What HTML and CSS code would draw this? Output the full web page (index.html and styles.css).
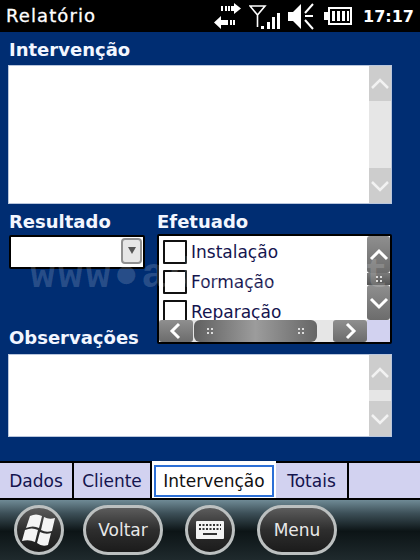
FILE: index.html
```html
<!DOCTYPE html>
<html>
<head>
    <meta charset="UTF-8">
    <meta name="viewport" content="width=device-width, initial-scale=1.0">
    <title>Relatório</title>
    <link rel="stylesheet" href="styles.css">
</head>

<body>
    <div class="phone">
        <!-- Status bar -->
        <div class="titlebar">
            <span class="title">Relatório</span>
            <div class="tray">
                <svg class="ico-sync" width="30" height="30" viewBox="0 0 30 30">
                    <path fill="#fff" d="M8 5h2v5H8zM12 5h2v5h-2zM15 5h2v5h-2zM18 5h3V2l7 5.500-7 5.500v-3h-3z"/>
                    <path fill="#fff" d="M8 15v4h7v5H8v4l-7-6.500z"/>
                    <path fill="#fff" d="M17 19h2v5h-2zM20 19h2v5h-2z"/>
                </svg>
                <svg class="ico-signal" width="32" height="30" viewBox="0 0 32 30">
                    <path fill="none" stroke="#fff" stroke-width="1.600" d="M1 5h15L8.500 14zM8.500 14v12"/>
                    <path fill="#fff" d="M12 25h3v3h-3zM18 21h3v7h-3zM23 16h3v12h-3zM28 12h3v16h-3z"/>
                </svg>
                <svg class="ico-sound" width="28" height="30" viewBox="0 0 28 30">
                    <path fill="#fff" d="M1 11h5l8-8v25l-8-8H1z"/>
                    <path fill="none" stroke="#fff" stroke-width="2" d="M18 12l8-9M18 15h8M18 19l8 9"/>
                </svg>
                <svg class="ico-batt" width="28" height="20" viewBox="0 0 28 20">
                    <path fill="#fff" d="M4 1h24v18H4zM0 6h4v8H0z"/>
                    <path fill="#000" d="M6 3h20v14H6z"/>
                    <path fill="#fff" d="M8 5h3v10H8zM13 5h3v10h-3zM18 5h3v10h-3zM23 5h2v10h-2z"/>
                </svg>
                <span class="clock">17:17</span>
            </div>
        </div>

        <!-- Form -->
        <div class="content">
            <div class="watermark">www●adamix●pt</div>

            <label class="lbl">Intervenção</label>
            <div class="memo memo-big">
                <div class="vscroll">
                    <div class="arrow-btn"><svg width="22" height="16" viewBox="0 0 22 16"><path d="M3 12l8-8 8 8" fill="none" stroke="#f2f2f2" stroke-width="2.500"/></svg></div>
                    <div class="track"></div>
                    <div class="arrow-btn"><svg width="22" height="16" viewBox="0 0 22 16"><path d="M3 4l8 8 8-8" fill="none" stroke="#f2f2f2" stroke-width="2.500"/></svg></div>
                </div>
            </div>

            <div class="two-col">
                <div class="col-left">
                    <label class="lbl">Resultado</label>
                    <div class="combo">
                        <div class="combo-btn"><span class="combo-tri"></span></div>
                    </div>
                </div>
                <div class="col-right">
                    <label class="lbl lbl-right">Efetuado</label>
                    <div class="list">
                        <div class="list-main">
                            <div class="items">
                                <div class="item"><span class="check"></span>Instalação</div>
                                <div class="item"><span class="check"></span>Formação</div>
                                <div class="item"><span class="check"></span>Reparação</div>
                            </div>
                            <div class="hscroll">
                                <div class="dark-btn"><svg width="24" height="18" viewBox="0 0 24 18"><path d="M15 2L8 9l7 7" fill="none" stroke="#fff" stroke-width="3"/></svg></div>
                                <div class="hthumb"><span class="grip"></span><span class="grip"></span></div>
                                <div class="htrack"></div>
                                <div class="dark-btn"><svg width="24" height="18" viewBox="0 0 24 18"><path d="M9 2l7 7-7 7" fill="none" stroke="#fff" stroke-width="3"/></svg></div>
                            </div>
                        </div>
                        <div class="list-side">
                            <div class="dark-btn v-up"><svg width="22" height="18" viewBox="0 0 22 18"><path d="M3 13l8-8 8 8" fill="none" stroke="#fff" stroke-width="3"/></svg></div>
                            <div class="vthumb"><span class="grip"></span></div>
                            <div class="dark-btn v-down"><svg width="22" height="18" viewBox="0 0 22 18"><path d="M3 5l8 8 8-8" fill="none" stroke="#fff" stroke-width="3"/></svg></div>
                            <div class="corner"></div>
                        </div>
                    </div>
                </div>
            </div>

            <label class="lbl lbl-obs">Observações</label>
            <div class="memo memo-small">
                <div class="vscroll">
                    <div class="arrow-btn"><svg width="22" height="16" viewBox="0 0 22 16"><path d="M3 12l8-8 8 8" fill="none" stroke="#f2f2f2" stroke-width="2.500"/></svg></div>
                    <div class="track"></div>
                    <div class="arrow-btn"><svg width="22" height="16" viewBox="0 0 22 16"><path d="M3 4l8 8 8-8" fill="none" stroke="#f2f2f2" stroke-width="2.500"/></svg></div>
                </div>
            </div>
        </div>

        <!-- Tabs -->
        <div class="tabs">
            <div class="tab tab-dados">Dados</div>
            <div class="tab tab-cliente">Cliente</div>
            <div class="tab-active"><span class="tab-focus">Intervenção</span></div>
            <div class="tab tab-totais">Totais</div>
            <div class="tab-rest"></div>
        </div>

        <!-- Bottom buttons -->
        <div class="softbar">
            <div class="pill round start">
                <svg width="36" height="34" viewBox="0 0 36 34">
                    <path fill="#f4f4f4" d="M9 3Q15 0 21 3L18 15Q12 12 5 15zM23 4Q28 7 34 5L31 18Q25 20 20 17zM4 17Q11 14 17 17L14 29Q8 26 1 28zM19 19Q25 22 30 20L27 32Q21 34 16 30z"/>
                </svg>
            </div>
            <div class="pill wide">Voltar</div>
            <div class="pill round">
                <svg width="28" height="18" viewBox="0 0 28 18">
                    <rect x="0" y="0" width="28" height="18" rx="1" fill="#f4f4f4"/>
                    <path stroke="#333" stroke-width="2" stroke-dasharray="2 1.500" d="M3 4h22M3 8h22"/>
                    <path stroke="#333" stroke-width="2" d="M7 13h14"/>
                </svg>
            </div>
            <div class="pill wide">Menu</div>
        </div>
    </div>
</body>

</html>
```

FILE: styles.css
```css
html, body {
    margin: 0;
    padding: 0;
}

body {
    font-family: "DejaVu Sans", Arial, sans-serif;
    background-color: #002d72;
}

.phone {
    width: 420px;
    height: 560px;
    display: flex;
    flex-direction: column;
    overflow: hidden;
}

/* Status bar */
.titlebar {
    height: 32px;
    background-color: #000;
    color: #fff;
    display: flex;
    align-items: center;
    justify-content: space-between;
    padding: 0 6px;
    flex-shrink: 0;
}

.title {
    font-size: 18px;
    letter-spacing: 1.1px;
    -webkit-text-stroke: 0.3px #fff;
    margin-top: -1px;
}

.tray {
    display: flex;
    align-items: center;
}

.ico-sync,
.ico-signal {
    margin-right: 6px;
}

.ico-batt {
    margin-left: 9px;
}

.clock {
    font-size: 16px;
    font-weight: bold;
    margin-left: 11px;
}

/* Form */
.content {
    position: relative;
    flex: 1;
    background-color: #002d72;
    padding: 8px 28px 0 8px;
    display: flex;
    flex-direction: column;
}

.watermark {
    position: absolute;
    left: 30px;
    top: 220px;
    font-family: "Liberation Mono", monospace;
    font-size: 42px;
    font-weight: bold;
    letter-spacing: 2.600px;
    line-height: 48px;
    white-space: nowrap;
    color: rgba(255, 255, 255, 0.16);
    z-index: 2;
}

.lbl {
    display: block;
    color: #f2f6ff;
    font-size: 18px;
    font-weight: bold;
    line-height: 20px;
    height: 25px;
    padding-left: 1px;
}

.lbl-right {
    padding-left: 0;
}

.lbl-obs {
    margin-top: -16px;
    height: 26px;
}

.memo {
    background-color: #fff;
    border: 1px solid #b9c6dc;
    display: flex;
    justify-content: flex-end;
    width: 384px;
    box-sizing: border-box;
}

.memo-big {
    height: 139px;
}

.memo-small {
    height: 83px;
}

.vscroll {
    width: 22px;
    display: flex;
    flex-direction: column;
}

.arrow-btn {
    height: 35px;
    background-color: #cdcdcd;
    display: flex;
    align-items: center;
    justify-content: center;
    flex-shrink: 0;
}

.track {
    flex: 1;
    background-color: #e6e6e6;
}

.two-col {
    display: flex;
    margin-top: 8px;
}

.col-left {
    width: 149px;
}

.col-right {
    flex: 1;
}

.combo {
    width: 136px;
    height: 34px;
    box-sizing: border-box;
    background-color: #fff;
    border: 2px solid #000;
    border-radius: 2px;
    margin: -2px 0 0 1px;
    display: flex;
    justify-content: flex-end;
    padding-right: 1px;
}

.combo-btn {
    width: 21px;
    height: 26px;
    box-sizing: border-box;
    border: 2px solid #909090;
    border-radius: 4px;
    background-color: #e6e6e6;
    display: flex;
    justify-content: center;
    padding-top: 7px;
    margin-top: 1px;
}

.combo-tri {
    width: 0;
    height: 0;
    border-left: 4px solid transparent;
    border-right: 4px solid transparent;
    border-top: 7px solid #555;
}

.list {
    width: 235px;
    height: 110px;
    box-sizing: border-box;
    border: 2px solid #000;
    border-radius: 2px;
    background-color: #fff;
    margin-top: -3px;
    display: flex;
}

.list-main {
    flex: 1;
    display: flex;
    flex-direction: column;
    min-width: 0;
}

.items {
    flex: 1;
    overflow: hidden;
    padding: 1px 0 0 4px;
}

.item {
    height: 30px;
    display: flex;
    align-items: center;
    font-size: 17px;
    color: #14144e;
}

.check {
    width: 24px;
    height: 24px;
    border: 2px solid #111;
    margin-right: 4px;
    flex-shrink: 0;
    box-sizing: border-box;
    border-radius: 1px;
}

.hscroll {
    height: 22px;
    display: flex;
    background-color: #e6e6e6;
    flex-shrink: 0;
}

.dark-btn {
    width: 34px;
    background: linear-gradient(#8f8f8f, #6c6c6c);
    border-radius: 3px;
    display: flex;
    align-items: center;
    justify-content: center;
    flex-shrink: 0;
}

.hthumb {
    width: 123px;
    background: linear-gradient(90deg, #606060, #9c9c9c 50%, #666);
    border-radius: 6px;
    display: flex;
    align-items: center;
    justify-content: space-between;
    padding: 0 12px;
    box-sizing: border-box;
    margin-left: 1px;
}

.htrack {
    flex: 1;
}

.grip {
    width: 8px;
    height: 8px;
    background-image: radial-gradient(#ddd 1.200px, transparent 1.500px);
    background-size: 4px 4px;
}

.list-side {
    width: 23px;
    display: flex;
    flex-direction: column;
    flex-shrink: 0;
}

.v-up {
    width: 23px;
    height: 37px;
}

.v-down {
    width: 23px;
    height: 35px;
}

.vthumb {
    height: 12px;
    background: linear-gradient(#7a7a7a, #555);
    display: flex;
    align-items: center;
    justify-content: center;
}

.corner {
    flex: 1;
    background-color: #d2d2f0;
}

/* Tabs */
.tabs {
    height: 39px;
    background-color: #d2d2f0;
    display: flex;
    flex-shrink: 0;
    border-bottom: 2px solid #000;
    border-top: 2px solid #000;
    box-sizing: border-box;
    color: #14144e;
    font-size: 17px;
}

.tab {
    display: flex;
    align-items: center;
    justify-content: center;
    border-right: 2px solid #000;
    box-sizing: border-box;
}

.tab-dados {
    width: 74px;
}

.tab-cliente {
    width: 78px;
}

.tab-active {
    width: 124px;
    background-color: #fff;
    margin-top: -3px;
    padding: 5px 2px 1px;
    box-sizing: border-box;
    display: flex;
    color: #111;
}

.tab-focus {
    flex: 1;
    border: 2px solid #2c6fd6;
    display: flex;
    align-items: center;
    justify-content: center;
}

.tab-totais {
    width: 73px;
}

.tab-rest {
    flex: 1;
}

/* Soft keys */
.softbar {
    height: 60px;
    flex-shrink: 0;
    background: linear-gradient(#6f8a95 0, #3d5058 22%, #0c1416 52%, #1f2a2d 100%);
    display: flex;
    align-items: center;
    padding-left: 14px;
    gap: 22px;
}

.pill {
    height: 50px;
    box-sizing: border-box;
    border: 3px solid #bcc0c0;
    border-radius: 25px;
    background: linear-gradient(#5c5c5c, #2e2e2e 50%, #1b1b1b);
    color: #e8e8e8;
    font-size: 17px;
    display: flex;
    align-items: center;
    justify-content: center;
}

.round {
    width: 50px;
}

.start {
    margin-right: -3px;
}

.wide {
    width: 80px;
}
```
